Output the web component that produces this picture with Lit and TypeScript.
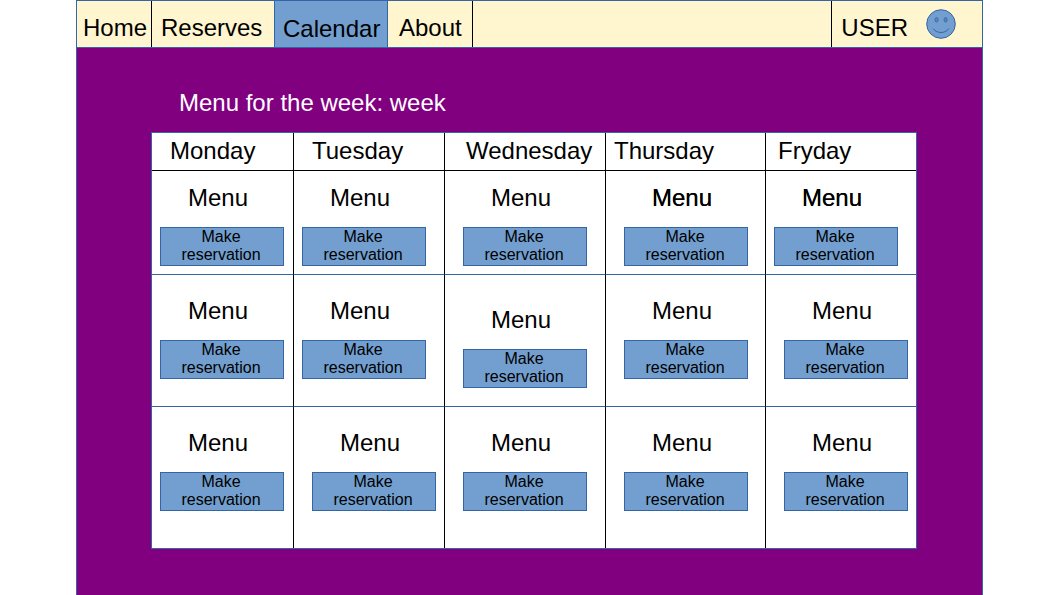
import { LitElement, html, css } from "lit";
import { customElement, property } from "lit/decorators.js";
import { classMap } from "lit/directives/class-map.js";

interface Slot {
  shifted?: boolean;
  lowered?: boolean;
  strong?: boolean;
}

const DAYS = [
  { name: "Monday", inset: "wide" },
  { name: "Tuesday", inset: "wide" },
  { name: "Wednesday", inset: "wider" },
  { name: "Thursday", inset: "narrow" },
  { name: "Fryday", inset: "medium" },
];

const WEEKS: { size: string; slots: Slot[] }[] = [
  {
    size: "short",
    slots: [{}, {}, { shifted: true }, { shifted: true, strong: true }, { strong: true }],
  },
  {
    size: "regular",
    slots: [{}, {}, { shifted: true, lowered: true }, { shifted: true }, { shifted: true }],
  },
  {
    size: "tall",
    slots: [{}, { shifted: true }, { shifted: true }, { shifted: true }, { shifted: true }],
  },
];

@customElement("menu-slot")
class MenuSlot extends LitElement {
  @property({ type: Boolean }) strong = false;

  static styles = css`
    :host {
      display: block;
      width: 124px;
    }
    .name {
      margin: 0 0 15px;
      padding-right: 8px;
      text-align: center;
    }
    .strong {
      text-shadow: 0 0 currentColor;
    }
    .reserve {
      display: block;
      box-sizing: border-box;
      width: 100%;
      height: 39px;
      margin: 0;
      padding: 0 14px 1px 12px;
      border: 1px solid #3465a4;
      border-radius: 0;
      background: #729fcf;
      color: #000;
      font: 16px/18px "Liberation Sans", Arial, sans-serif;
      text-align: center;
      cursor: pointer;
    }
  `;

  render() {
    return html`
      <p class=${classMap({ name: true, strong: this.strong })}>Menu</p>
      <button class="reserve" type="button">Make reservation</button>
    `;
  }
}

@customElement("nav-bar")
class NavBar extends LitElement {
  static styles = css`
    :host {
      display: flex;
      justify-content: space-between;
      border-top: 1px solid #3465a4;
      border-bottom: 1px solid #3465a4;
      background: #fff5ce;
    }
    .tabs {
      display: flex;
    }
    .tab {
      box-sizing: border-box;
      padding: 13px 0 5px;
      color: #000;
      text-decoration: none;
      white-space: nowrap;
    }
    .home {
      width: 75px;
      padding-left: 6px;
      border-right: 1px solid #000;
    }
    .reserves {
      width: 122px;
      padding-left: 9px;
    }
    .calendar {
      width: 114px;
      padding: 14px 0 4px 8px;
      border-left: 1px solid #3465a4;
      border-right: 1px solid #3465a4;
      background: #729fcf;
    }
    .about {
      width: 85px;
      padding-left: 11px;
      border-right: 1px solid #000;
    }
    .user {
      display: flex;
      align-items: center;
      gap: 18px;
      padding-left: 9px;
      padding-right: 26px;
      border-left: 1px solid #000;
    }
    .face {
      display: block;
      width: 30px;
      height: 30px;
    }
  `;

  render() {
    return html`
      <nav class="tabs">
        <a class="tab home" href="#home">Home</a>
        <a class="tab reserves" href="#reserves">Reserves</a>
        <a class="tab calendar" href="#calendar" aria-current="page">Calendar</a>
        <a class="tab about" href="#about">About</a>
      </nav>
      <div class="user">
        <a class="tab" href="#user">USER</a>
        <svg class="face" viewBox="0 0 30 30" aria-hidden="true">
          <circle cx="15" cy="15" r="14.3" fill="#729fcf" stroke="#3465a4" />
          <ellipse cx="10.6" cy="10.8" rx="1.6" ry="2.3" fill="#5b85b8" stroke="#3465a4" stroke-width="0.8" />
          <ellipse cx="19.6" cy="10.8" rx="1.6" ry="2.3" fill="#5b85b8" stroke="#3465a4" stroke-width="0.8" />
          <path d="M7.2 19.6C10.5 24.8 19.5 24.8 22.8 19.6" fill="none" stroke="#3465a4" />
        </svg>
      </div>
    `;
  }
}

@customElement("app-root")
class AppRoot extends LitElement {
  static styles = css`
    :host {
      display: block;
      background: #fff;
      color: #000;
      font: 24px/28px "Liberation Sans", Arial, sans-serif;
    }
    .frame {
      box-sizing: border-box;
      min-height: 100vh;
      margin: 0 75px 0 76px;
      border-left: 1px solid #3465a4;
      border-right: 1px solid #3465a4;
      background: #800080;
    }
    .content {
      padding: 41px 65px 40px 74px;
    }
    .title {
      margin: 0 0 15px;
      padding-left: 28px;
      color: #fff;
      font-size: 24px;
      font-weight: normal;
    }
    .week {
      width: 100%;
      table-layout: fixed;
      border-collapse: separate;
      border-spacing: 0;
      border: 1px solid #3465a4;
      background: #fff;
    }
    .col-1 {
      width: 142px;
    }
    .col-2 {
      width: 151px;
    }
    .col-3 {
      width: 161px;
    }
    .col-4 {
      width: 160px;
    }
    .col-5 {
      width: 150px;
    }
    .day,
    .cell {
      box-sizing: border-box;
      border-right: 1px solid #000;
      text-align: left;
      vertical-align: top;
    }
    .day:last-child,
    .cell:last-child {
      border-right: 0;
    }
    .day {
      padding: 4px 0 5px;
      border-bottom: 1px solid #000;
      font-weight: normal;
    }
    .narrow {
      padding-left: 8px;
    }
    .medium {
      padding-left: 12px;
    }
    .wide {
      padding-left: 18px;
    }
    .wider {
      padding-left: 21px;
    }
    .cell {
      padding: 22px 0 0 8px;
      border-bottom: 1px solid #3465a4;
    }
    .short .cell {
      height: 104px;
      padding-top: 13px;
    }
    .regular .cell {
      height: 132px;
    }
    .tall .cell {
      height: 141px;
      border-bottom: 0;
    }
    .cell.shifted {
      padding-left: 18px;
    }
    .cell.lowered {
      padding-top: 31px;
    }
  `;

  render() {
    return html`
      <div class="frame">
        <nav-bar></nav-bar>
        <main class="content">
          <h1 class="title" id="title">Menu for the week: week</h1>
          <table class="week" aria-labelledby="title">
            <colgroup>
              ${DAYS.map((_, i) => html`<col class="col-${i + 1}" />`)}
            </colgroup>
            <thead>
              <tr>
                ${DAYS.map((d) => html`<th class="day ${d.inset}" scope="col">${d.name}</th>`)}
              </tr>
            </thead>
            <tbody>
              ${WEEKS.map(
                (week) => html`
                  <tr class=${week.size}>
                    ${week.slots.map(
                      (s) => html`
                        <td class=${classMap({ cell: true, shifted: !!s.shifted, lowered: !!s.lowered })}>
                          <menu-slot ?strong=${!!s.strong}></menu-slot>
                        </td>
                      `
                    )}
                  </tr>
                `
              )}
            </tbody>
          </table>
        </main>
      </div>
    `;
  }
}
